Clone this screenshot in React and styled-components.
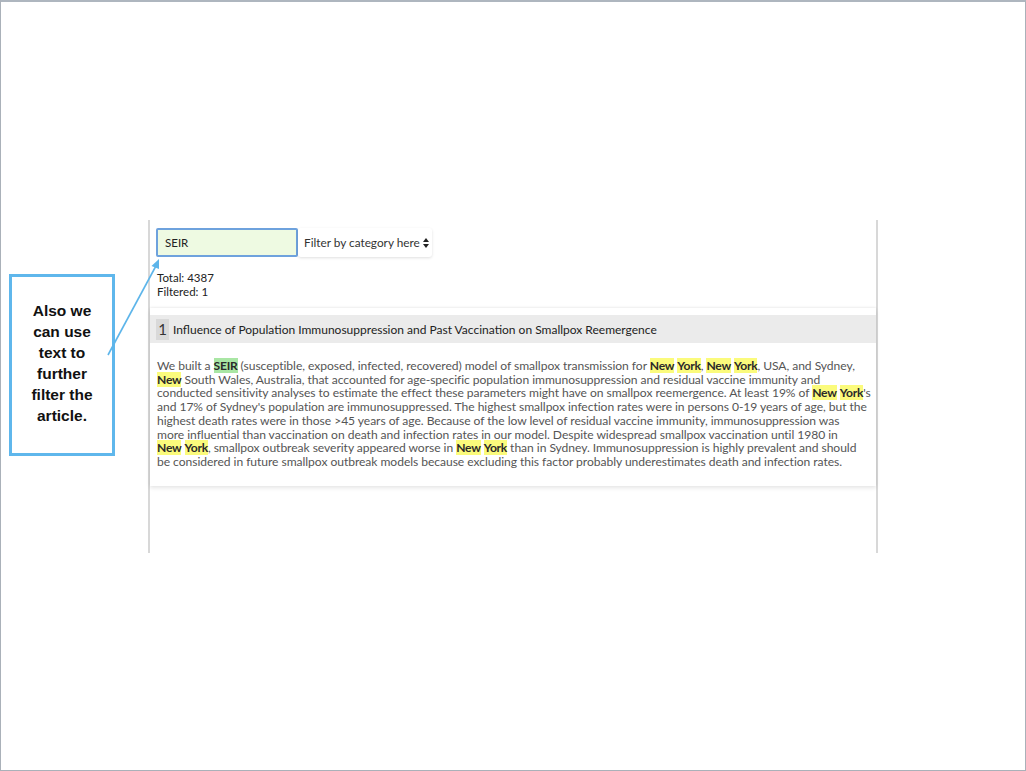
import styled, { createGlobalStyle } from 'styled-components';

const GlobalStyle = createGlobalStyle`
  html, body {
    margin: 0;
    padding: 0;
    background: #fff;
  }
  * {
    box-sizing: border-box;
  }
`;

const App = () => {
  return(
    <>
      <GlobalStyle />
      <Slide>
        <Panel>
          <Controls>
            <SearchInput defaultValue="SEIR" />
            <CategorySelect>
              <span>Filter by category here</span>
              <Arrows>
                <svg width="6" height="10" viewBox="0 0 6 10">
                  <path d="M3 0 L6 4 L0 4 Z M3 10 L6 6 L0 6 Z" fill="#222" />
                </svg>
              </Arrows>
            </CategorySelect>
          </Controls>

          <Counts>
            <div>Total: 4387</div>
            <div>Filtered: 1</div>
          </Counts>

          <Card>
            <CardHeader>
              <Index>1</Index>
              <Title>Influence of Population Immunosuppression and Past Vaccination on Smallpox Reemergence</Title>
            </CardHeader>
            <Abstract>
              We built a <Hit $kind="search">SEIR</Hit> (susceptible, exposed, infected, recovered) model of smallpox transmission for <Hit>New</Hit> <Hit>York</Hit>, <Hit>New</Hit> <Hit>York</Hit>, USA, and Sydney,<br />
              <Hit>New</Hit> South Wales, Australia, that accounted for age-specific population immunosuppression and residual vaccine immunity and<br />
              conducted sensitivity analyses to estimate the effect these parameters might have on smallpox reemergence. At least 19% of <Hit>New</Hit> <Hit>York</Hit>'s<br />
              and 17% of Sydney's population are immunosuppressed. The highest smallpox infection rates were in persons 0-19 years of age, but the<br />
              highest death rates were in those &gt;45 years of age. Because of the low level of residual vaccine immunity, immunosuppression was<br />
              more influential than vaccination on death and infection rates in our model. Despite widespread smallpox vaccination until 1980 in<br />
              <Hit>New</Hit> <Hit>York</Hit>, smallpox outbreak severity appeared worse in <Hit>New</Hit> <Hit>York</Hit> than in Sydney. Immunosuppression is highly prevalent and should<br />
              be considered in future smallpox outbreak models because excluding this factor probably underestimates death and infection rates.
            </Abstract>
          </Card>
        </Panel>

        <Callout>
          Also we<br />
          can use<br />
          text to<br />
          further<br />
          filter the<br />
          article.
        </Callout>

        <Pointer width="1026" height="771" viewBox="0 0 1026 771">
          <line x1="107" y1="353" x2="156" y2="262" stroke="#5db5ea" strokeWidth="1.6" />
          <path d="M158 257 L150.5 264 L158 267 Z" fill="#5db5ea" />
        </Pointer>
      </Slide>
    </>
  );
};

const Slide = styled.div`
  position: relative;
  width: 1026px;
  height: 771px;
  padding: 218px 0 0 147px;
  border-top: 2px solid #aeb6bf;
  border-left: 1px solid #aab1b9;
  border-right: 1px solid #aab1b9;
  border-bottom: 1px solid #aab1b9;
  background: #fff;
  overflow: hidden;
`;

const Panel = styled.div`
  width: 730px;
  height: 333px;
  border-left: 2px solid #d8d8d8;
  border-right: 2px solid #d8d8d8;
  font-family: Lato, "Open Sans", sans-serif;
`;

const Controls = styled.div`
  display: flex;
  align-items: flex-start;
  padding: 8px 0 0 6px;
`;

const SearchInput = styled.input`
  width: 142px;
  height: 29px;
  margin: 0;
  padding: 0 0 0 7px;
  border: 2px solid #6ea2dd;
  border-radius: 2px;
  background: #eefae2;
  font-family: Lato, "Open Sans", sans-serif;
  font-size: 11.5px;
  color: #222;
  outline: none;
`;

const CategorySelect = styled.div`
  display: flex;
  align-items: center;
  gap: 3px;
  height: 29px;
  padding: 0 3px 0 6px;
  background: #fff;
  border-radius: 3px;
  box-shadow: 0 1px 3px rgba(0, 0, 0, 0.13);
  font-size: 11.8px;
  color: #333;
`;

const Arrows = styled.span`
  display: flex;
  align-items: center;
`;

const Counts = styled.div`
  padding: 14px 0 0 7px;
  font-size: 11.5px;
  line-height: 14px;
  color: #222;
`;

const Card = styled.div`
  margin-top: 9px;
  padding: 7px 0 17px;
  background: #fff;
  box-shadow: 0 -1px 2px rgba(0, 0, 0, 0.06), 0 2px 4px rgba(0, 0, 0, 0.1);
`;

const CardHeader = styled.div`
  display: flex;
  align-items: center;
  height: 28px;
  padding-left: 6px;
  background: #ebebeb;
`;

const Index = styled.span`
  display: flex;
  align-items: center;
  justify-content: center;
  width: 13px;
  height: 21px;
  background: #d9d9d9;
  font-size: 15px;
  color: #333;
`;

const Title = styled.span`
  margin-left: 4px;
  font-size: 12px;
  color: #222;
`;

const Abstract = styled.p`
  margin: 16px 0 0;
  padding: 0 7px;
  font-size: 12.1px;
  line-height: 13.7px;
  letter-spacing: -0.05px;
  color: #555;
  white-space: nowrap;
`;

const Hit = styled.span`
  background: ${p => (p.$kind === 'search' ? '#a9e6a4' : '#fbfb7c')};
  color: #2a2a2a;
  font-weight: 700;
  letter-spacing: -0.25px;
`;

const Callout = styled.div`
  position: absolute;
  left: 8px;
  top: 272px;
  width: 106px;
  height: 182px;
  padding-top: 23px;
  border: 3px solid #5fb7ec;
  background: #fff;
  font-family: "Liberation Sans", Arial, sans-serif;
  font-size: 15.5px;
  font-weight: 700;
  line-height: 21px;
  text-align: center;
  color: #111;
`;

const Pointer = styled.svg`
  position: absolute;
  left: 0;
  top: 0;
  pointer-events: none;
`;

export default App;
